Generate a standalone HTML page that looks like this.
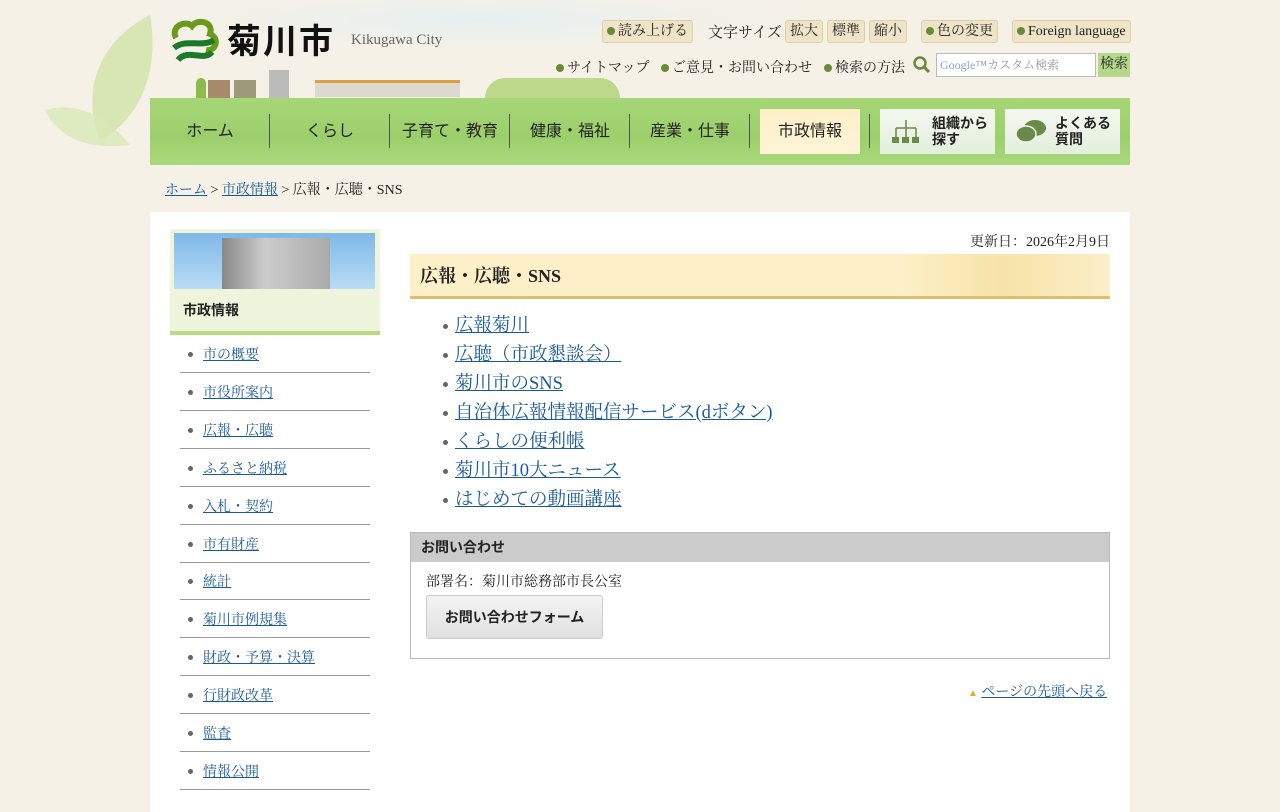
<!DOCTYPE html>
<html><head><meta charset="utf-8"><style>
*{margin:0;padding:0;box-sizing:border-box}
body{width:1280px;height:800px;overflow:hidden;background:#f6f1e7;font-family:"Liberation Serif","Noto Serif CJK SC",serif;font-size:14px;color:#222;position:relative}
.abs{position:absolute}
a{color:#1a5a9a}
.sans{font-family:"Liberation Sans","Noto Sans CJK JP",sans-serif}
.btn{position:absolute;top:20px;height:23px;background:#efe3c8;border:1px solid #e0cfa6;border-radius:3px;font-size:14px;line-height:21px;padding:0 4px;color:#222}
.dot{display:inline-block;width:8px;height:8px;border-radius:50%;background:#6a8a3a;margin-right:3px;vertical-align:0}
.nav{position:absolute;top:98px;left:150px;width:980px;height:67px;background:linear-gradient(#a6d676,#9ccf6c 60%,#a9d97c)}
.nav span{position:absolute;top:0;height:67px;line-height:67px;font-size:16px;text-align:center;width:120px;font-family:"Liberation Sans","Noto Sans CJK JP",sans-serif;color:#222}
.sep{position:absolute;top:16px;width:1px;height:34px;background:#555}
.side li{list-style:none;position:absolute;left:180px;width:190px;height:38px;border-bottom:1px solid #999;font-size:14px}
.side li:before{content:"";position:absolute;left:8px;top:17px;width:5px;height:5px;border-radius:50%;background:#666}
.side li a{position:absolute;left:23px;top:9px}
.links div{position:absolute;left:455px;font-size:18.5px}
.links div:before{content:"";position:absolute;left:-12px;top:13px;width:5px;height:5px;border-radius:50%;background:#666}
</style></head><body>
<div class="abs" style="left:0;top:0;width:1280px;height:100px;background:radial-gradient(ellipse at 480px 20px,#e6eff0 0,#f3f1e8 260px,#f6f1e7 400px)"></div>
<svg class="abs" style="left:40px;top:10px" width="120" height="140"><path d="M110 5 C60 30 40 80 60 130 C100 110 120 60 110 5Z" fill="#cfe3a6" opacity=".8"/><path d="M5 100 C40 90 70 110 90 135 C50 140 20 130 5 100Z" fill="#d8e8b5" opacity=".8"/></svg>
<svg class="abs" style="left:168px;top:18px" width="52" height="50"><path d="M8 20 C2 8 18 2 24 8 C30 0 46 4 42 16 C52 20 48 34 38 32" fill="none" stroke="#6a9a1a" stroke-width="6"/><path d="M6 30 C18 20 34 30 46 22 M10 42 C20 30 36 44 44 34" fill="none" stroke="#1a7a2a" stroke-width="6"/></svg>
<div class="abs sans" style="left:227px;top:20px;font-size:34px;font-weight:bold;letter-spacing:2px;color:#111;line-height:44px">菊川市</div>
<div class="abs" style="left:351px;top:32px;font-size:15px;color:#666">Kikugawa City</div>
<div class="abs" style="left:196px;top:78px;width:10px;height:20px;background:#8cbc4a;border-radius:5px 5px 0 0"></div>
<div class="abs" style="left:208px;top:80px;width:22px;height:18px;background:#a88a6a"></div>
<div class="abs" style="left:234px;top:80px;width:22px;height:18px;background:#9c9a78"></div>
<div class="abs" style="left:269px;top:70px;width:20px;height:28px;background:#bbb"></div>
<div class="abs" style="left:315px;top:80px;width:145px;height:17px;background:#dcdad0;border-top:3px solid #e0a040"></div>
<div class="abs" style="left:485px;top:78px;width:135px;height:20px;background:#bcd88a;border-radius:70px 70px 0 0"></div>
<div class="btn" style="left:602px"><span class="dot"></span>読み上げる</div>
<div class="abs" style="left:708px;top:21px;font-size:15px">文字サイズ</div>
<div class="btn" style="left:785px">拡大</div>
<div class="btn" style="left:827px">標準</div>
<div class="btn" style="left:869px">縮小</div>
<div class="btn" style="left:921px"><span class="dot"></span>色の変更</div>
<div class="btn" style="left:1012px"><span class="dot"></span>Foreign language</div>
<div class="abs" style="left:556px;top:57px;font-size:14px"><span class="dot"></span>サイトマップ</div>
<div class="abs" style="left:661px;top:57px;font-size:14px"><span class="dot"></span>ご意見・お問い合わせ</div>
<div class="abs" style="left:824px;top:57px;font-size:14px"><span class="dot"></span>検索の方法</div>
<svg class="abs" style="left:913px;top:56px" width="18" height="18"><circle cx="7" cy="7" r="5.5" fill="none" stroke="#6a8a3a" stroke-width="2.5"/><path d="M11 11 L16 16" stroke="#6a8a3a" stroke-width="3"/></svg>
<div class="abs" style="left:936px;top:53px;width:160px;height:24px;background:#fff;border:1px solid #bbb;font-size:12px;color:#999;line-height:22px;padding-left:3px" ><span style="color:#8aa0c8">Google</span>™カスタム検索</div>
<div class="abs" style="left:1098px;top:53px;width:32px;height:24px;background:#b5d88a;font-size:14px;line-height:24px;text-align:center">検索</div>
<div class="nav">
<span style="left:0">ホーム</span><div class="sep" style="left:119px"></div>
<span style="left:120px">くらし</span><div class="sep" style="left:239px"></div>
<span style="left:240px">子育て・教育</span><div class="sep" style="left:359px"></div>
<span style="left:360px">健康・福祉</span><div class="sep" style="left:479px"></div>
<span style="left:480px">産業・仕事</span><div class="sep" style="left:599px"></div>
<div class="abs" style="left:610px;top:11px;width:100px;height:45px;background:linear-gradient(#fdf0c8,#fff3d8)"></div>
<span style="left:600px">市政情報</span><div class="sep" style="left:719px"></div>
<div class="abs" style="left:730px;top:11px;width:115px;height:45px;background:linear-gradient(#f4f8f0,#e4eedc)"></div>
<svg class="abs" style="left:742px;top:20px" width="28" height="28"><path d="M14 2V10M4 10H24M4 10V20M14 10V20M24 10V20" stroke="#6a8a4a" stroke-width="1.5" fill="none"/><rect x="0" y="19" width="7" height="6" fill="#6a8a4a"/><rect x="10" y="19" width="7" height="6" fill="#6a8a4a"/><rect x="20" y="19" width="7" height="6" fill="#6a8a4a"/></svg>
<div class="abs sans" style="left:782px;top:17px;font-size:14px;font-weight:bold;line-height:16px">組織から<br>探す</div>
<div class="abs" style="left:855px;top:11px;width:115px;height:45px;background:linear-gradient(#f4f8f0,#e4eedc)"></div>
<svg class="abs" style="left:865px;top:20px" width="34" height="28"><ellipse cx="20" cy="10" rx="11" ry="8" fill="#6a8a4a"/><ellipse cx="11" cy="16" rx="10" ry="8" fill="#6a8a4a" stroke="#eef4e6" stroke-width="1.5"/></svg>
<div class="abs sans" style="left:905px;top:17px;font-size:14px;font-weight:bold;line-height:16px">よくある<br>質問</div>
</div>
<div class="abs" style="left:165px;top:179px;font-size:14px"><a href="#">ホーム</a> &gt; <a href="#">市政情報</a> &gt; 広報・広聴・SNS</div>
<div class="abs" style="left:150px;top:212px;width:980px;height:600px;background:#fff"></div>
<div class="abs" style="left:170px;top:229px;width:210px;height:60px;background:#eef5dc"></div>
<div class="abs" style="left:174px;top:233px;width:201px;height:56px;background:linear-gradient(#7fb8e8,#b8dcf4)"></div>
<div class="abs" style="left:222px;top:238px;width:108px;height:51px;background:linear-gradient(90deg,#888,#ccc 40%,#aaa);"></div>
<div class="abs" style="left:170px;top:289px;width:210px;height:46px;background:#eef5dc;border-bottom:4px solid #b8da80"></div>
<div class="abs sans" style="left:183px;top:300px;font-size:14px;font-weight:bold">市政情報</div>
<ul class="side">
<li style="top:335px"><a href="#">市の概要</a></li>
<li style="top:373px"><a href="#">市役所案内</a></li>
<li style="top:411px"><a href="#">広報・広聴</a></li>
<li style="top:449px"><a href="#">ふるさと納税</a></li>
<li style="top:487px"><a href="#">入札・契約</a></li>
<li style="top:525px"><a href="#">市有財産</a></li>
<li style="top:562px"><a href="#">統計</a></li>
<li style="top:600px"><a href="#">菊川市例規集</a></li>
<li style="top:638px"><a href="#">財政・予算・決算</a></li>
<li style="top:676px"><a href="#">行財政改革</a></li>
<li style="top:714px"><a href="#">監査</a></li>
<li style="top:752px"><a href="#">情報公開</a></li>
</ul>
<div class="abs" style="left:900px;top:231px;width:210px;text-align:right;font-size:14px">更新日：2026年2月9日</div>
<div class="abs" style="left:410px;top:254px;width:700px;height:45px;background:linear-gradient(90deg,#fdf0c8,#fdf0c8 70%,#f7e3a8 85%,#fbefc9);border-bottom:3px solid #ddbf72"></div>
<div class="abs" style="left:420px;top:262px;font-size:18px;font-weight:bold">広報・広聴・SNS</div>
<div class="links">
<div style="top:311px"><a href="#">広報菊川</a></div>
<div style="top:340px"><a href="#">広聴（市政懇談会）</a></div>
<div style="top:369px"><a href="#">菊川市のSNS</a></div>
<div style="top:398px"><a href="#">自治体広報情報配信サービス(dボタン)</a></div>
<div style="top:427px"><a href="#">くらしの便利帳</a></div>
<div style="top:456px"><a href="#">菊川市10大ニュース</a></div>
<div style="top:485px"><a href="#">はじめての動画講座</a></div>
</div>
<div class="abs" style="left:410px;top:532px;width:700px;height:127px;border:1px solid #bbb"></div>
<div class="abs sans" style="left:411px;top:533px;width:698px;height:29px;background:#cbcbcb;font-size:14px;font-weight:bold;line-height:28px;padding-left:10px">お問い合わせ</div>
<div class="abs" style="left:426px;top:571px;font-size:14px">部署名：菊川市総務部市長公室</div>
<div class="abs sans" style="left:426px;top:595px;width:177px;height:44px;background:linear-gradient(#f4f4f4,#e0e0e0);border:1px solid #ccc;border-radius:3px;font-size:14px;font-weight:bold;line-height:42px;text-align:center">お問い合わせフォーム</div>
<div class="abs" style="left:968px;top:681px;font-size:14px"><span style="color:#e8a830;font-size:10px">▲</span> <a href="#">ページの先頭へ戻る</a></div>
</body></html>
